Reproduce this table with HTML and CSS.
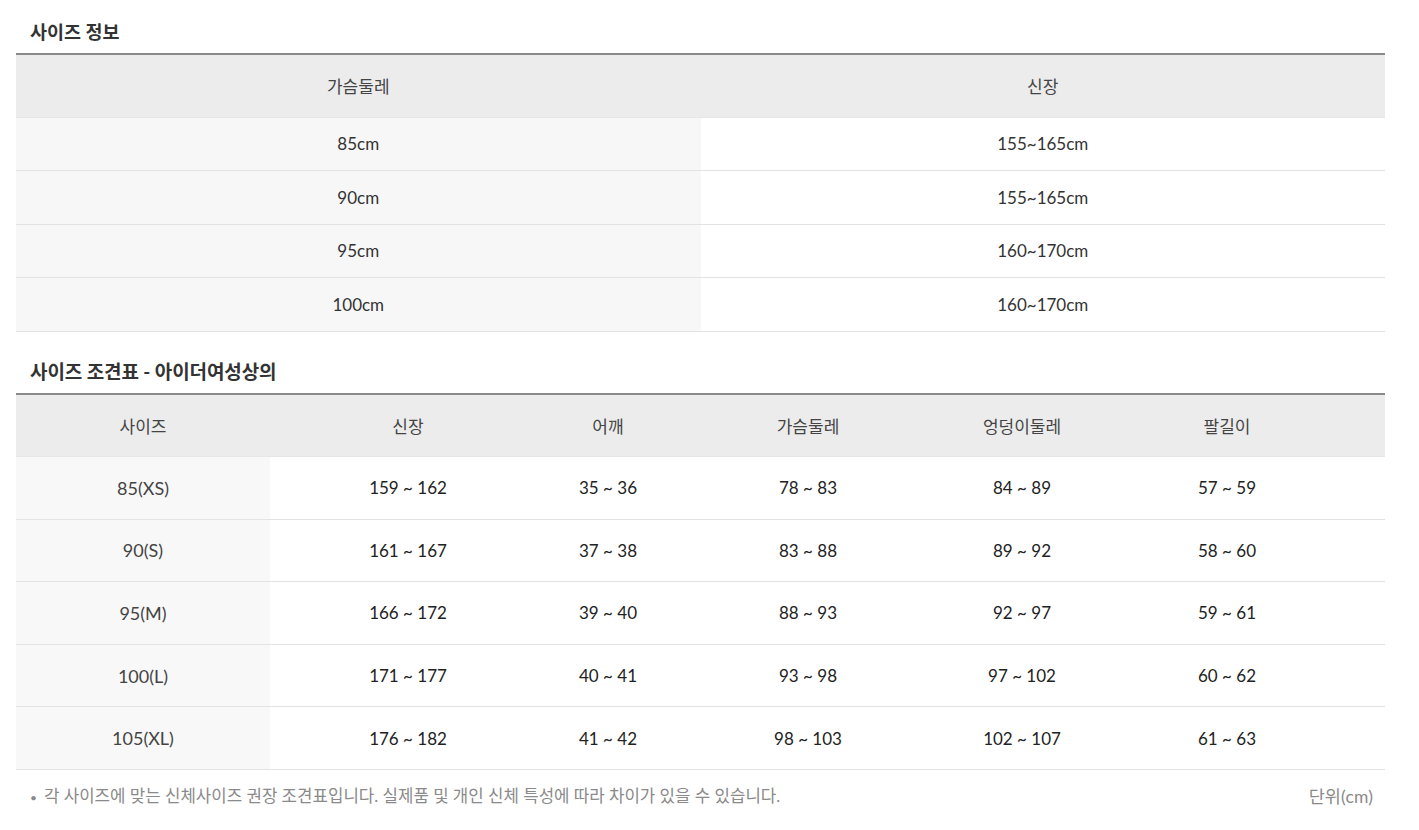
FILE: index.html
```html
<!DOCTYPE html>
<html lang="ko">
<head>
<meta charset="utf-8">
<title>사이즈 정보</title>
<link rel="stylesheet" href="styles.css">
</head>
<body>
<div class="wrap">
  <h2 class="title t1">사이즈 정보</h2>
  <table class="info">
    <colgroup><col class="half"><col class="half"></colgroup>
    <thead>
      <tr><th>가슴둘레</th><th>신장</th></tr>
    </thead>
    <tbody>
      <tr><td class="first">85cm</td><td>155~165cm</td></tr>
      <tr><td class="first">90cm</td><td>155~165cm</td></tr>
      <tr><td class="first">95cm</td><td>160~170cm</td></tr>
      <tr><td class="first">100cm</td><td>160~170cm</td></tr>
    </tbody>
  </table>

  <h2 class="title t2">사이즈 조견표 - 아이더여성상의</h2>
  <table class="chart">
    <colgroup>
      <col class="c1"><col class="c2"><col class="c3"><col class="c4"><col class="c5"><col class="c6">
    </colgroup>
    <thead>
      <tr><th>사이즈</th><th>신장</th><th>어깨</th><th>가슴둘레</th><th>엉덩이둘레</th><th class="last">팔길이</th></tr>
    </thead>
    <tbody>
      <tr><td class="first">85(XS)</td><td>159 ~ 162</td><td>35 ~ 36</td><td>78 ~ 83</td><td>84 ~ 89</td><td class="last">57 ~ 59</td></tr>
      <tr><td class="first">90(S)</td><td>161 ~ 167</td><td>37 ~ 38</td><td>83 ~ 88</td><td>89 ~ 92</td><td class="last">58 ~ 60</td></tr>
      <tr><td class="first">95(M)</td><td>166 ~ 172</td><td>39 ~ 40</td><td>88 ~ 93</td><td>92 ~ 97</td><td class="last">59 ~ 61</td></tr>
      <tr><td class="first">100(L)</td><td>171 ~ 177</td><td>40 ~ 41</td><td>93 ~ 98</td><td>97 ~ 102</td><td class="last">60 ~ 62</td></tr>
      <tr><td class="first">105(XL)</td><td>176 ~ 182</td><td>41 ~ 42</td><td>98 ~ 103</td><td>102 ~ 107</td><td class="last">61 ~ 63</td></tr>
    </tbody>
  </table>

  <div class="foot">
    <p class="note"><span class="dot">•</span>각 사이즈에 맞는 신체사이즈 권장 조견표입니다. 실제품 및 개인 신체 특성에 따라 차이가 있을 수 있습니다.</p>
    <p class="unit">단위(cm)</p>
  </div>
</div>
</body>
</html>
```
FILE: styles.css
```css
* { box-sizing: border-box; }
html, body { margin: 0; padding: 0; background: #fff; }
body {
  font-family: Lato, "Noto Sans CJK KR", sans-serif;
  color: #333;
}
.wrap {
  width: 1385px;
  padding-left: 16px;
}
.title {
  margin: 0;
  padding-left: 14px;
  font-weight: 700;
  color: #333;
  line-height: 22px;
}
.t1 { font-size: 18.5px; padding-top: 21px; padding-bottom: 10px; }
.t2 { font-size: 19px; padding-top: 29px; padding-bottom: 10px; letter-spacing: -0.1px; }

table {
  width: 1369px;
  border-collapse: collapse;
  table-layout: fixed;
  border-top: 2px solid #8a8a8a;
}
th, td {
  padding: 0;
  text-align: center;
  vertical-align: middle;
  border-bottom: 1px solid #e3e3e3;
}
th {
  background: #ececec;
  font-weight: 400;
  color: #444;
  font-size: 17px;
  height: 63px;
  border-bottom: 1px solid #e6e6e6;
}
.info .half { width: 684px; }
.info td {
  height: 53.5px;
  font-size: 17px;
  color: #333;
}
.info td.first { background: #f7f7f7; }

.chart .c1 { width: 254px; }
.chart .c2 { width: 276px; }
.chart .c3 { width: 124px; }
.chart .c4 { width: 276px; }
.chart .c5 { width: 152px; }
.chart .c6 { width: 287px; }
.chart td {
  height: 62.6px;
  font-size: 17px;
  color: #222;
}
.chart td.first {
  background: #f8f8f8;
  font-size: 18px;
  color: #444;
}
.chart .last { padding-right: 29px; }

.foot {
  display: flex;
  justify-content: space-between;
  align-items: center;
  padding: 15px 12px 0 14px;
}
.foot p { margin: 0; color: #8a8a8a; line-height: 22px; }
.note { font-size: 16.8px; }
.dot { display: inline-block; width: 14px; font-size: 12px; }
.unit { font-size: 17.5px; }
```
